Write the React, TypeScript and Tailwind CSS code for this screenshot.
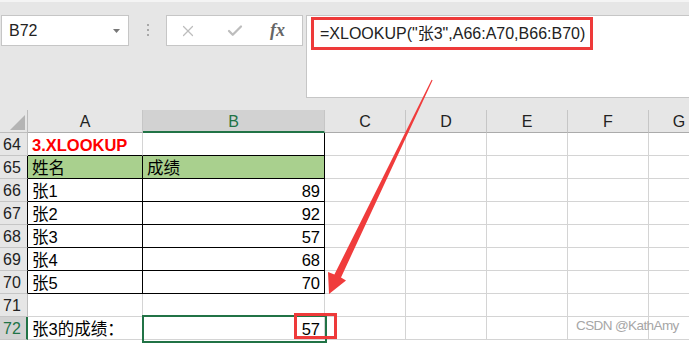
import { X, Check } from 'lucide-react';

const font = "font-['Liberation_Sans','Noto_Sans_CJK_SC',sans-serif]";

const rows: { n: number; a?: string; b?: string; kind?: 'title' | 'head' | 'body' | 'sel' }[] = [
  { n: 64, a: '3.XLOOKUP', kind: 'title' },
  { n: 65, a: '姓名', b: '成绩', kind: 'head' },
  { n: 66, a: '张1', b: '89', kind: 'body' },
  { n: 67, a: '张2', b: '92', kind: 'body' },
  { n: 68, a: '张3', b: '57', kind: 'body' },
  { n: 69, a: '张4', b: '68', kind: 'body' },
  { n: 70, a: '张5', b: '70', kind: 'body' },
  { n: 71 },
  { n: 72, a: '张3的成绩：', b: '57', kind: 'sel' },
];

function ColumnHeader() {
  return (
    <div className="flex h-[23px] bg-[#e6e6e6] text-[16px] text-[#222]">
      <div className="relative w-[28px] shrink-0 border-r border-b border-[#bdbdbd]">
        <svg className="absolute left-[10px] top-[5px]" width="15" height="15" viewBox="0 0 15 15">
          <polygon points="15,0 15,15 0,15" fill="#b4b4b4" />
        </svg>
      </div>
      <div className="flex w-[115px] shrink-0 items-center justify-center border-r border-b border-[#c6c6c6] border-b-[#ababab] pt-px">A</div>
      <div className="flex w-[182px] shrink-0 items-center justify-center border-r border-b-2 border-[#c6c6c6] border-b-[#217346] bg-[#d2d2d2] pt-[2px] text-[#217346]">B</div>
      <div className="flex w-[81px] shrink-0 items-center justify-center border-r border-b border-[#c6c6c6] border-b-[#ababab] pt-px">C</div>
      <div className="flex w-[81px] shrink-0 items-center justify-center border-r border-b border-[#c6c6c6] border-b-[#ababab] pt-px">D</div>
      <div className="flex w-[81px] shrink-0 items-center justify-center border-r border-b border-[#c6c6c6] border-b-[#ababab] pt-px">E</div>
      <div className="flex w-[81px] shrink-0 items-center justify-center border-r border-b border-[#c6c6c6] border-b-[#ababab] pt-px">F</div>
      <div className="flex w-[60px] shrink-0 items-center justify-center border-b border-[#ababab] pt-px">G</div>
    </div>
  );
}

function Row({ n, a, b, kind }: (typeof rows)[number]) {
  const boxed = kind === 'head' || kind === 'body';
  const sel = kind === 'sel';
  return (
    <div className="flex h-[23px] text-[16.5px]">
      <div
        className={
          sel
            ? 'flex w-[28px] shrink-0 items-center border-r-2 border-b border-[#c6c6c6] border-r-[#217346] bg-[#d2d2d2] pl-[3px] pt-[2px] text-[16px] text-[#217346]'
            : boxed
              ? 'flex w-[28px] shrink-0 items-center border-r border-b border-[#c6c6c6] border-r-black bg-[#e6e6e6] pl-[3px] pt-[2px] text-[16px] text-[#222]'
              : 'flex w-[28px] shrink-0 items-center border-r border-b border-[#c6c6c6] border-r-[#bdbdbd] bg-[#e6e6e6] pl-[3px] pt-[2px] text-[16px] text-[#222]'
        }
      >
        {n}
      </div>
      <div
        className={
          boxed
            ? `flex w-[115px] shrink-0 items-center border-r border-b border-black pl-[4px] pt-[3px] text-black ${kind === 'head' ? 'bg-[#a9d08e]' : ''}`
            : kind === 'title'
              ? 'flex w-[115px] shrink-0 items-center border-r border-b border-[#d4d4d4] border-b-black pl-[4px] pt-[3px] font-bold text-[#ff0000]'
              : 'flex w-[115px] shrink-0 items-center border-r border-b border-[#d4d4d4] pl-[4px] pt-[3px] text-black'
        }
      >
        {a}
      </div>
      <div
        className={
          kind === 'head'
            ? 'flex w-[182px] shrink-0 items-center border-r border-b border-black bg-[#a9d08e] pl-[4px] pt-[3px] text-black'
            : kind === 'body'
              ? 'flex w-[182px] shrink-0 items-center justify-end border-r border-b border-black pr-[4px] pt-[3px] text-black'
              : kind === 'title'
                ? 'flex w-[182px] shrink-0 items-center border-r border-b border-[#d4d4d4] border-r-black border-b-black'
                : 'flex w-[182px] shrink-0 items-center justify-end border-r border-b border-[#d4d4d4] pr-[4px] pt-[3px] text-black'
        }
      >
        {b}
      </div>
      <div className="w-[81px] shrink-0 border-r border-b border-[#d4d4d4]" />
      <div className="w-[81px] shrink-0 border-r border-b border-[#d4d4d4]" />
      <div className="w-[81px] shrink-0 border-r border-b border-[#d4d4d4]" />
      <div className="w-[81px] shrink-0 border-r border-b border-[#d4d4d4]" />
      <div className="w-[60px] shrink-0 border-b border-[#d4d4d4]" />
    </div>
  );
}

export default function App() {
  return (
    <div className={`relative h-[343px] w-[689px] overflow-hidden bg-white ${font}`}>
      <div className="h-[110px] bg-[#e6e6e6]">
        <div className="h-[2px] bg-[#f4f4f4]" />
        <div className="flex items-start pt-[13px]">
          <div className="ml-px flex h-[31px] w-[128px] shrink-0 items-center justify-between border border-[#c6c6c6] bg-white pl-[7px] pr-[8px] text-[16px] text-[#222]">
            <span>B72</span>
            <svg width="7" height="4" viewBox="0 0 7 4">
              <polygon points="0,0 7,0 3.5,4" fill="#777" />
            </svg>
          </div>
          <div className="flex w-[37px] shrink-0 flex-col items-center gap-[3px] pt-[9px] pl-[1px]">
            <span className="h-[2px] w-[2px] bg-[#a8a8a8]" />
            <span className="h-[2px] w-[2px] bg-[#a8a8a8]" />
            <span className="h-[2px] w-[2px] bg-[#a8a8a8]" />
          </div>
          <div className="flex h-[31px] w-[137px] shrink-0 items-center border border-[#c6c6c6] bg-white">
            <X className="ml-[12px] text-[#bdbdbd]" size={18} strokeWidth={1.6} />
            <Check className="ml-[29px] text-[#bdbdbd]" size={18} strokeWidth={3} />
            <span className="ml-[26px] font-['Liberation_Serif',serif] text-[18px] font-bold italic text-[#666]">fx</span>
          </div>
          <div className="ml-[3px] h-[83px] flex-1 border border-r-0 border-[#c6c6c6] bg-white pl-[13px] pt-[6px] text-[16px] text-[#222]">
            =XLOOKUP("张3",A66:A70,B66:B70)
          </div>
        </div>
      </div>

      <ColumnHeader />
      {rows.map((r) => (
        <Row key={r.n} {...r} />
      ))}

      {/* selection of B72 */}
      <div className="absolute left-[142px] top-[315px] h-[28px] w-[185px] border-2 border-[#217346]" />

      {/* red callouts */}
      <div className="absolute left-[311px] top-[17px] h-[33px] w-[282px] border-[3px] border-[#ee3a3a]" />
      <div className="absolute left-[294px] top-[313px] h-[26px] w-[43px] border-[3px] border-[#ee3a3a]" />

      <svg className="pointer-events-none absolute left-0 top-0" width="689" height="343" viewBox="0 0 689 343">
        <polygon
          points="432.6,80.3 341,277.5 346,280.5 329,294 328,272 334.4,274.5 431.6,79.8"
          fill="#f03c3c"
        />
      </svg>

      <div className="absolute left-[576px] top-[316px] text-[13.5px] tracking-[-0.6px] text-[#a6a6a6]">CSDN @KathAmy</div>
    </div>
  );
}
